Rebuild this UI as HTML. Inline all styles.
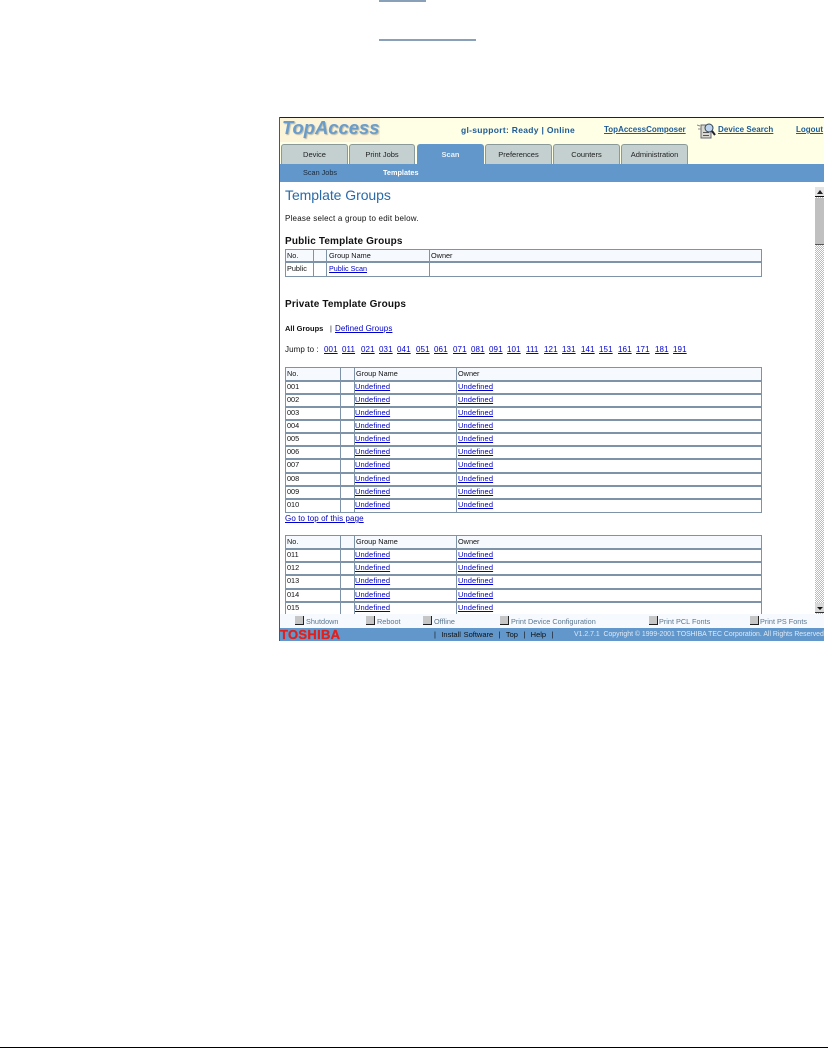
<!DOCTYPE html>
<html><head><meta charset="utf-8"><style>
html,body{margin:0;padding:0;background:#fff;width:828px;height:1048px;overflow:hidden}
body{position:relative;font-family:"Liberation Sans",sans-serif}
div,a{position:absolute;white-space:nowrap}
#s{left:279px;top:117px;width:545px;height:524px;background:#fff;overflow:hidden}
#w{position:absolute;left:-279px;top:-117px;width:828px;height:1048px;filter:blur(.3px)}
.x{font-size:7.3px;line-height:10px;color:#111}
.l{color:#00c;text-decoration:underline;font-size:7.5px;line-height:10px;letter-spacing:.1px}
.n{color:#1d5a96;text-decoration:underline;font-weight:bold;font-size:8px;line-height:10px}
.h{font-weight:bold;font-size:10px;line-height:12px;color:#111;letter-spacing:.15px}
.tab{top:144px;height:20px;background:#c4d0d0;border:1px solid #8a9a9a;border-bottom:0;border-radius:3px 3px 0 0;box-sizing:border-box;text-align:center;font-size:7.5px;line-height:19px;color:#222}
.g{background:#7f93a8}
.hd{background:#f6faff}
.b{background:#c6c6c6;border-right:1px solid #222;border-bottom:1px solid #222;box-sizing:border-box;width:9px;height:9px}
.f{font-size:7.3px;line-height:10px;color:#5a7690}
.w{font-size:7px;line-height:10px;color:#dfe9f4}
</style></head><body>
<div style="left:379px;top:0;width:47px;height:2px;background:#88a0b8"></div>
<div style="left:379px;top:39px;width:97px;height:2px;background:#88a0b8"></div>
<div style="left:0;top:1047px;width:828px;height:1px;background:#000"></div>

<div id="s"><div id="w">
<div style="left:280px;top:118px;width:544px;height:46px;background:#ffffe6"></div>
<div style="left:280px;top:118px;width:100px;height:24px;background:#fbf4d8"></div>
<div style="left:282px;top:116px;font:italic bold 18.4px/24px 'Liberation Sans',sans-serif;color:#6a9ccb;text-shadow:1px 1px 1px #b9b9a8">TopAccess</div>
<div style="left:461px;top:125px;font-weight:bold;font-size:8.5px;line-height:11px;color:#1d5a96;letter-spacing:.3px">gl-support: Ready | Online</div>
<a class="n" style="left:604px;top:125px">TopAccessComposer</a>
<svg style="position:absolute;left:697px;top:122px" width="20" height="17" viewBox="0 0 20 17"><rect x="4" y="3" width="10" height="13" fill="#d8d8d0" stroke="#667"/><rect x="6" y="10" width="6" height="1" fill="#555"/><rect x="6" y="13" width="6" height="1" fill="#555"/><circle cx="12" cy="6" r="4" fill="#bcd4ee" stroke="#345"/><path d="M15 9l3 4" stroke="#223" stroke-width="2"/><path d="M0 3l3 1M1 7h3" stroke="#888"/></svg>
<a class="n" style="left:718px;top:125px;letter-spacing:.05px">Device Search</a>
<a class="n" style="left:796px;top:125px">Logout</a>

<div class="tab" style="left:281px;width:67px">Device</div>
<div class="tab" style="left:349px;width:66px">Print Jobs</div>
<div class="tab" style="left:417px;width:67px;background:#6297cb;border-color:#6297cb;color:#e8f0f8;font-weight:bold">Scan</div>
<div class="tab" style="left:485px;width:67px">Preferences</div>
<div class="tab" style="left:553px;width:67px">Counters</div>
<div class="tab" style="left:621px;width:67px">Administration</div>
<div style="left:280px;top:164px;width:544px;height:18px;background:#6297cb"></div>
<div class="x" style="left:303px;top:168px;color:#1a2a3a">Scan Jobs</div>
<div class="x" style="left:383px;top:168px;color:#fff;font-weight:bold">Templates</div>

<div style="left:285px;top:186px;font-size:14px;line-height:18px;color:#2a6aa8;letter-spacing:-.05px">Template Groups</div>
<div style="left:285px;top:214px;font-size:8px;line-height:10px;color:#111;letter-spacing:.22px">Please select a group to edit below.</div>
<div class="h" style="left:285px;top:236px">Public Template Groups</div>

<!-- public table -->
<div class="g" style="left:285px;top:249px;width:477px;height:28px"></div>
<div class="hd" style="left:286px;top:250px;width:27px;height:11px"></div><div class="hd" style="left:314px;top:250px;width:12px;height:11px"></div><div class="hd" style="left:327px;top:250px;width:102px;height:11px"></div><div class="hd" style="left:430px;top:250px;width:331px;height:11px"></div>
<div style="left:286px;top:263px;width:27px;height:13px;background:#fff"></div><div style="left:314px;top:263px;width:12px;height:13px;background:#fff"></div><div style="left:327px;top:263px;width:102px;height:13px;background:#fff"></div><div style="left:430px;top:263px;width:331px;height:13px;background:#fff"></div>
<div class="x" style="left:287px;top:251px">No.</div><div class="x" style="left:329px;top:251px">Group Name</div><div class="x" style="left:431px;top:251px">Owner</div>
<div class="x" style="left:287px;top:264px">Public</div><a class="l" style="left:329px;top:264px;font-size:7.2px;letter-spacing:0">Public Scan</a>

<div class="h" style="left:285px;top:299px">Private Template Groups</div>
<div class="x" style="left:285px;top:324px;font-weight:bold;font-size:7.5px">All Groups</div>
<div class="x" style="left:330px;top:324px">|</div>
<a class="l" style="left:335px;top:324px;font-size:8px">Defined Groups</a>
<div style="left:285px;top:345px;font-size:8px;line-height:10px;color:#111;letter-spacing:.1px">Jump to :</div>
<a class="l" style="left:324px;top:345px;font-size:8px">001</a><a class="l" style="left:342px;top:345px;font-size:8px">011</a><a class="l" style="left:361px;top:345px;font-size:8px">021</a><a class="l" style="left:379px;top:345px;font-size:8px">031</a><a class="l" style="left:397px;top:345px;font-size:8px">041</a><a class="l" style="left:416px;top:345px;font-size:8px">051</a><a class="l" style="left:434px;top:345px;font-size:8px">061</a><a class="l" style="left:453px;top:345px;font-size:8px">071</a><a class="l" style="left:471px;top:345px;font-size:8px">081</a><a class="l" style="left:489px;top:345px;font-size:8px">091</a><a class="l" style="left:507px;top:345px;font-size:8px">101</a><a class="l" style="left:526px;top:345px;font-size:8px">111</a><a class="l" style="left:544px;top:345px;font-size:8px">121</a><a class="l" style="left:562px;top:345px;font-size:8px">131</a><a class="l" style="left:581px;top:345px;font-size:8px">141</a><a class="l" style="left:599px;top:345px;font-size:8px">151</a><a class="l" style="left:618px;top:345px;font-size:8px">161</a><a class="l" style="left:636px;top:345px;font-size:8px">171</a><a class="l" style="left:655px;top:345px;font-size:8px">181</a><a class="l" style="left:673px;top:345px;font-size:8px">191</a>

<!-- table 1 -->
<div class="g" style="left:285px;top:367px;width:477px;height:146px"></div>
<div class="hd" style="left:286px;top:368px;width:475px;height:12px"></div>
<div style="left:286px;top:382px;width:475px;height:11px;background:#fff"></div>
<div style="left:286px;top:395px;width:475px;height:11px;background:#fff"></div>
<div style="left:286px;top:408px;width:475px;height:11px;background:#fff"></div>
<div style="left:286px;top:421px;width:475px;height:11px;background:#fff"></div>
<div style="left:286px;top:434px;width:475px;height:11px;background:#fff"></div>
<div style="left:286px;top:447px;width:475px;height:11px;background:#fff"></div>
<div style="left:286px;top:460px;width:475px;height:12px;background:#fff"></div>
<div style="left:286px;top:474px;width:475px;height:11px;background:#fff"></div>
<div style="left:286px;top:487px;width:475px;height:11px;background:#fff"></div>
<div style="left:286px;top:500px;width:475px;height:12px;background:#fff"></div>
<div class="g" style="left:340px;top:367px;width:1px;height:146px"></div>
<div class="g" style="left:354px;top:367px;width:1px;height:146px"></div>
<div class="g" style="left:456px;top:367px;width:1px;height:146px"></div>
<div class="x" style="left:287px;top:369px">No.</div><div class="x" style="left:356px;top:369px">Group Name</div><div class="x" style="left:458px;top:369px">Owner</div>
<div class="x" style="left:287px;top:382px">001</div><a class="l" style="left:355px;top:382px">Undefined</a><a class="l" style="left:458px;top:382px">Undefined</a>
<div class="x" style="left:287px;top:395px">002</div><a class="l" style="left:355px;top:395px">Undefined</a><a class="l" style="left:458px;top:395px">Undefined</a>
<div class="x" style="left:287px;top:408px">003</div><a class="l" style="left:355px;top:408px">Undefined</a><a class="l" style="left:458px;top:408px">Undefined</a>
<div class="x" style="left:287px;top:421px">004</div><a class="l" style="left:355px;top:421px">Undefined</a><a class="l" style="left:458px;top:421px">Undefined</a>
<div class="x" style="left:287px;top:434px">005</div><a class="l" style="left:355px;top:434px">Undefined</a><a class="l" style="left:458px;top:434px">Undefined</a>
<div class="x" style="left:287px;top:447px">006</div><a class="l" style="left:355px;top:447px">Undefined</a><a class="l" style="left:458px;top:447px">Undefined</a>
<div class="x" style="left:287px;top:460px">007</div><a class="l" style="left:355px;top:460px">Undefined</a><a class="l" style="left:458px;top:460px">Undefined</a>
<div class="x" style="left:287px;top:474px">008</div><a class="l" style="left:355px;top:474px">Undefined</a><a class="l" style="left:458px;top:474px">Undefined</a>
<div class="x" style="left:287px;top:487px">009</div><a class="l" style="left:355px;top:487px">Undefined</a><a class="l" style="left:458px;top:487px">Undefined</a>
<div class="x" style="left:287px;top:500px">010</div><a class="l" style="left:355px;top:500px">Undefined</a><a class="l" style="left:458px;top:500px">Undefined</a>
<a class="l" style="left:285px;top:514px;font-size:8px">Go to top of this page</a>

<!-- table 2 -->
<div class="g" style="left:285px;top:535px;width:477px;height:79px"></div>
<div class="hd" style="left:286px;top:536px;width:475px;height:12px"></div>
<div style="left:286px;top:550px;width:475px;height:11px;background:#fff"></div>
<div style="left:286px;top:563px;width:475px;height:11px;background:#fff"></div>
<div style="left:286px;top:576px;width:475px;height:12px;background:#fff"></div>
<div style="left:286px;top:590px;width:475px;height:11px;background:#fff"></div>
<div style="left:286px;top:603px;width:475px;height:11px;background:#fff"></div>
<div class="g" style="left:340px;top:535px;width:1px;height:79px"></div>
<div class="g" style="left:354px;top:535px;width:1px;height:79px"></div>
<div class="g" style="left:456px;top:535px;width:1px;height:79px"></div>
<div class="x" style="left:287px;top:537px">No.</div><div class="x" style="left:356px;top:537px">Group Name</div><div class="x" style="left:458px;top:537px">Owner</div>
<div class="x" style="left:287px;top:550px">011</div><a class="l" style="left:355px;top:550px">Undefined</a><a class="l" style="left:458px;top:550px">Undefined</a>
<div class="x" style="left:287px;top:563px">012</div><a class="l" style="left:355px;top:563px">Undefined</a><a class="l" style="left:458px;top:563px">Undefined</a>
<div class="x" style="left:287px;top:576px">013</div><a class="l" style="left:355px;top:576px">Undefined</a><a class="l" style="left:458px;top:576px">Undefined</a>
<div class="x" style="left:287px;top:590px">014</div><a class="l" style="left:355px;top:590px">Undefined</a><a class="l" style="left:458px;top:590px">Undefined</a>
<div class="x" style="left:287px;top:603px">015</div><a class="l" style="left:355px;top:603px">Undefined</a><a class="l" style="left:458px;top:603px">Undefined</a>

<!-- scrollbar -->
<div style="left:815px;top:187px;width:9px;height:427px;background:repeating-conic-gradient(#bbb 0 25%,#fff 0 50%) 0 0/2px 2px"></div>
<div style="left:815px;top:187px;width:9px;height:10px;background:#e4e4e4;border-bottom:1px solid #111;box-sizing:border-box"></div>
<div style="left:817px;top:190px;width:0;height:0;border:3px solid transparent;border-top:0;border-bottom:4px solid #222"></div>
<div style="left:815px;top:198px;width:9px;height:47px;background:#c0c0c0;border-bottom:1px solid #555;box-sizing:border-box"></div>
<div style="left:815px;top:603px;width:9px;height:10px;background:#d8d8d8;border-bottom:1px solid #333;box-sizing:border-box"></div>
<div style="left:817px;top:607px;width:0;height:0;border:3px solid transparent;border-bottom:0;border-top:3px solid #111"></div>

<!-- footer -->
<div style="left:280px;top:614px;width:544px;height:14px;background:#f6faff"></div>
<div class="b" style="left:295px;top:616px"></div><div class="f" style="left:306px;top:617px">Shutdown</div>
<div class="b" style="left:366px;top:616px"></div><div class="f" style="left:377px;top:617px">Reboot</div>
<div class="b" style="left:423px;top:616px"></div><div class="f" style="left:434px;top:617px">Offline</div>
<div class="b" style="left:500px;top:616px"></div><div class="f" style="left:511px;top:617px">Print Device Configuration</div>
<div class="b" style="left:649px;top:616px"></div><div class="f" style="left:659px;top:617px">Print PCL Fonts</div>
<div class="b" style="left:750px;top:616px"></div><div class="f" style="left:760px;top:617px">Print PS Fonts</div>

<div style="left:280px;top:628px;width:544px;height:13px;background:#6297cb"></div>
<div style="left:280px;top:627px;font-weight:bold;font-size:13px;line-height:15px;color:#e0201c;letter-spacing:.3px;-webkit-text-stroke:.3px #e0201c">TOSHIBA</div>
<div style="left:434px;top:629px;font-size:7.5px;line-height:11px;color:#111;word-spacing:.6px">| &nbsp;Install Software &nbsp;| &nbsp;Top &nbsp;| &nbsp;Help &nbsp;| </div>
<div class="w" style="left:574px;top:629px;line-height:11px;font-size:6.9px">V1.2.7.1&nbsp; Copyright © 1999-2001 TOSHIBA TEC Corporation. All Rights Reserved.</div>

<!-- frame lines -->
<div style="left:279px;top:117px;width:545px;height:1px;background:#222"></div>
<div style="left:279px;top:117px;width:1px;height:524px;background:#555"></div>
</div></div>
</body></html>
